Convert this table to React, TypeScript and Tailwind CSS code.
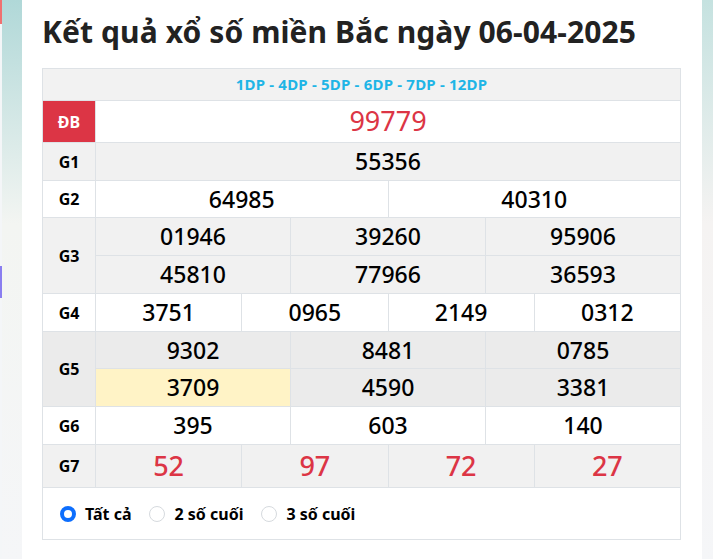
import { useState } from "react";

const border = "border border-[#dee2e6]";

const Cell = ({ span, className = "", children }: { span: number; className?: string; children: React.ReactNode }) => (
  <td colSpan={span} className={`${border} text-center ${className}`}>
    {children}
  </td>
);

const Label = ({ children, rows = 1, className = "" }: { children: React.ReactNode; rows?: number; className?: string }) => (
  <td rowSpan={rows} className={`${border} text-center text-[16px] font-bold text-black ${className}`}>
    {children}
  </td>
);

const Radio = ({ checked, label, onClick }: { checked: boolean; label: string; onClick: () => void }) => (
  <label className="flex items-center gap-[9px] cursor-pointer" onClick={onClick}>
    {checked ? (
      <span className="w-4 h-4 rounded-full border-[4.5px] border-[#0d6efd] bg-white" />
    ) : (
      <span className="w-4 h-4 rounded-full border border-[#d6dade] bg-white" />
    )}
    <span className="text-[16px] font-bold text-black">{label}</span>
  </label>
);

export default function App() {
  const [mode, setMode] = useState(0);

  return (
    <div className="flex w-[713px] h-[559px] overflow-hidden font-['Noto_Sans',sans-serif]">
      {/* bên trái */}
      <div className="w-[22px] flex">
        <div className="w-[2px] flex flex-col bg-[#f4f6f8]">
          <div className="h-6 bg-[#f07070]" />
          <div className="h-[242px]" />
          <div className="h-8 bg-[#8a7ef0]" />
        </div>
        <div className="flex-1 bg-gradient-to-b from-[#b0d8d8] via-[#f3f5f2] via-40% to-[#f5f6f8]" />
      </div>

      <div className="w-[680px] bg-white px-5 pt-[13px]">
        <h1 className="text-[30px] leading-[38px] font-bold text-[#222] tracking-[0.1px] mb-[17px]">
          Kết quả xổ số miền Bắc ngày 06-04-2025
        </h1>

        <table className="w-[639px] table-fixed border-collapse">
          <colgroup>
            <col className="w-[53px]" />
            {Array.from({ length: 12 }).map((_, i) => (
              <col key={i} />
            ))}
          </colgroup>
          <tbody>
            <tr className="h-[32px] bg-[#f2f2f2]">
              <td colSpan={13} className={`${border} text-center text-[15px] font-bold text-[#1fb5e6] tracking-[0.2px]`}>
                1DP - 4DP - 5DP - 6DP - 7DP - 12DP
              </td>
            </tr>
            <tr className="h-[42px] bg-white">
              <Label className="bg-[#dc3545] !text-white">ĐB</Label>
              <Cell span={12} className="text-[27px] text-[#dc3545]">99779</Cell>
            </tr>
            <tr className="h-[38px] bg-[#f1f1f1] text-[23px] font-medium text-black">
              <Label>G1</Label>
              <Cell span={12}>55356</Cell>
            </tr>
            <tr className="h-[37px] bg-white text-[23px] font-medium text-black">
              <Label>G2</Label>
              <Cell span={6}>64985</Cell>
              <Cell span={6}>40310</Cell>
            </tr>
            <tr className="h-[38px] bg-[#f1f1f1] text-[23px] font-medium text-black">
              <Label rows={2}>G3</Label>
              <Cell span={4}>01946</Cell>
              <Cell span={4}>39260</Cell>
              <Cell span={4}>95906</Cell>
            </tr>
            <tr className="h-[38px] bg-[#f1f1f1] text-[23px] font-medium text-black">
              <Cell span={4}>45810</Cell>
              <Cell span={4}>77966</Cell>
              <Cell span={4}>36593</Cell>
            </tr>
            <tr className="h-[38px] bg-white text-[23px] font-medium text-black">
              <Label>G4</Label>
              <Cell span={3}>3751</Cell>
              <Cell span={3}>0965</Cell>
              <Cell span={3}>2149</Cell>
              <Cell span={3}>0312</Cell>
            </tr>
            <tr className="h-[37px] bg-[#ebebeb] text-[23px] font-medium text-black">
              <Label rows={2}>G5</Label>
              <Cell span={4}>9302</Cell>
              <Cell span={4}>8481</Cell>
              <Cell span={4}>0785</Cell>
            </tr>
            <tr className="h-[38px] bg-[#ebebeb] text-[23px] font-medium text-black">
              <Cell span={4} className="bg-[#fff3c6]">3709</Cell>
              <Cell span={4}>4590</Cell>
              <Cell span={4}>3381</Cell>
            </tr>
            <tr className="h-[38px] bg-white text-[23px] font-medium text-black">
              <Label>G6</Label>
              <Cell span={4}>395</Cell>
              <Cell span={4}>603</Cell>
              <Cell span={4}>140</Cell>
            </tr>
            <tr className="h-[43px] bg-[#f1f1f1] text-[27px] font-medium text-[#dc3545]">
              <Label>G7</Label>
              <Cell span={3}>52</Cell>
              <Cell span={3}>97</Cell>
              <Cell span={3}>72</Cell>
              <Cell span={3}>27</Cell>
            </tr>
            <tr className="h-[52px] bg-white">
              <td colSpan={13} className={`${border} px-[17px]`}>
                <div className="flex items-center gap-[18px]">
                  <Radio checked={mode === 0} label="Tất cả" onClick={() => setMode(0)} />
                  <Radio checked={mode === 1} label="2 số cuối" onClick={() => setMode(1)} />
                  <Radio checked={mode === 2} label="3 số cuối" onClick={() => setMode(2)} />
                </div>
              </td>
            </tr>
          </tbody>
        </table>
      </div>

      {/* bên phải */}
      <div className="flex-1 bg-gradient-to-b from-[#c5e2e0] via-[#f5f3f2] via-40% to-[#f5f6f8]" />
    </div>
  );
}
